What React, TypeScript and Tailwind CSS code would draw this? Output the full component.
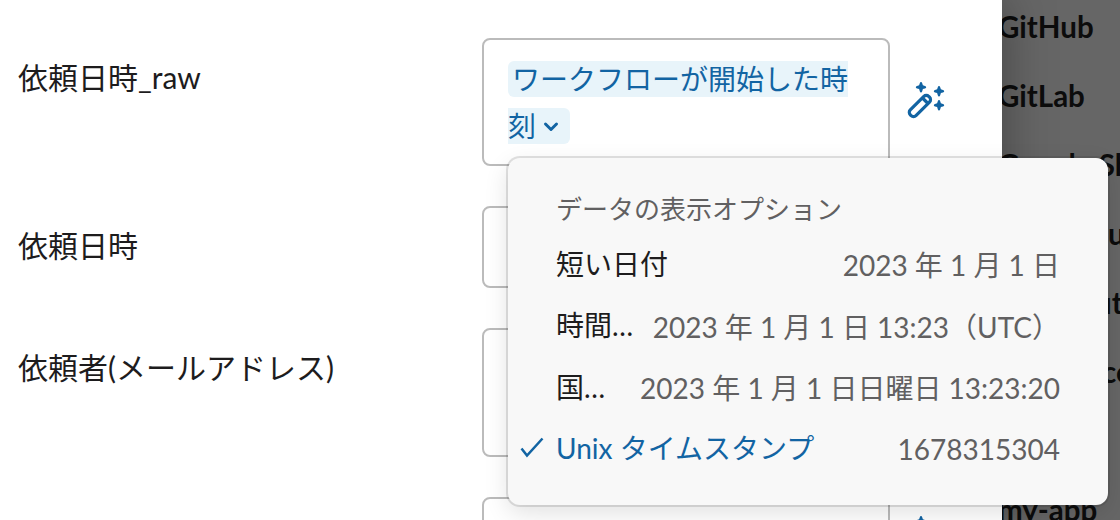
import React from "react";
import clsx from "clsx";

const apps = [
	{ name: "GitHub", offset: "pl-0" },
	{ name: "GitLab", offset: "pl-0" },
	{ name: "Google Sheets", offset: "pl-0" },
	{ name: "u", offset: "pl-[110px]" },
	{ name: "ut", offset: "pl-[97px]" },
	{ name: "co", offset: "pl-[104px]" },
	{ name: "", offset: "pl-0" },
	{ name: "my-app", offset: "pl-0" },
];

const options = [
	{ label: "短い日付", value: "2023 年 1 月 1 日" },
	{ label: "時間", truncated: true, value: "2023 年 1 月 1 日 13:23（UTC）" },
	{ label: "国", truncated: true, value: "2023 年 1 月 1 日日曜日 13:23:20" },
	{ label: "Unix タイムスタンプ", value: "1678315304", selected: true },
];

const sparkle =
	"M15 1.500q.9 0 1.200 1.200l.7 2.100 2.100.7q1.200.4 1.200 1.200t-1.200 1.200l-2.100.7-.7 2.100q-.3 1.200-1.200 1.200t-1.200-1.200l-.7-2.100-2.100-.7q-1.200-.4-1.200-1.200t1.200-1.200l2.100-.7.7-2.100q.3-1.200 1.200-1.200z";

const WandIcon = () => (
	<svg width="40" height="40" viewBox="0 0 40 40" fill="none" className="shrink-0">
		<g stroke="#1264a3" strokeWidth="3.2" strokeLinejoin="round">
			<rect x="-13" y="-4" width="26" height="8" rx="3.4" transform="translate(13.900 24) rotate(-45)" />
			<path d="M16.500 16l5.500 5.500" />
		</g>
		<g fill="#1264a3">
			<path d={sparkle} transform="translate(0 -1.500)" />
			<path d={sparkle} transform="translate(18 2.500)" />
			<path d={sparkle} transform="translate(18 16.500)" />
		</g>
	</svg>
);

type FieldRowProps = {
	label?: string;
	height: string;
	children?: React.ReactNode;
	icon?: React.ReactNode;
};

const FieldRow = ({ label, height, children, icon }: FieldRowProps) => (
	<div className={clsx("flex shrink-0", height)}>
		<div className="w-[464px] shrink-0 pt-[17px] text-[30px] leading-[44px]">{label}</div>
		<div className="w-[408px] shrink-0 rounded-lg border-2 border-[#bbb] pl-6 pt-4">
			{children}
		</div>
		<div className="flex items-center pl-4">{icon}</div>
	</div>
);

const DateOptionsMenu = () => (
	<div className="absolute left-[508px] top-[158px] z-20 h-[347px] w-[600px] rounded-xl bg-[#f8f8f8] px-12 pt-[29px] shadow-[0_0_0_2px_rgba(29,28,29,0.13),0_8px_24px_rgba(0,0,0,0.12)]">
		<div className="h-[46.3px] text-[26px] leading-[44px] text-[#616061]">
			データの表示オプション
		</div>
		<ul>
			{options.map((option) => (
				<li
					key={option.label}
					className="relative flex h-[61.3px] items-center justify-between whitespace-nowrap text-[28px] leading-[44px]"
				>
					{option.selected && (
						<svg width="24" height="22" viewBox="0 0 24 22" fill="none" className="absolute -left-9 top-5">
							<path d="M1.500 11.500L7 18.500L22.500 1.500" stroke="#1264a3" strokeWidth="2.500" />
						</svg>
					)}
					<span className={option.selected ? "text-[#1264a3]" : "text-[#1d1c1d]"}>
						{option.label}
						{option.truncated && <span className="tracking-[0.6px]">...</span>}
					</span>
					<span className="pt-[3px] text-[#616061]">{option.value}</span>
				</li>
			))}
		</ul>
	</div>
);

const App = () => {
	return (
		<div className="relative flex h-[520px] w-[1120px] overflow-hidden bg-[#666] font-['Lato','Noto_Sans_CJK_JP',sans-serif] text-[#1d1c1d]">
			<main className="z-10 flex w-[1002px] shrink-0 flex-col gap-10 bg-white pl-[18px] pt-[38px] shadow-[0_0_48px_rgba(0,0,0,0.35)]">
				<FieldRow label="依頼日時_raw" height="h-32" icon={<WandIcon />}>
					<div className="w-[344px] text-[28px] leading-[47px]">
						<span className="rounded-md bg-[#e8f4fa] py-px pl-1 pr-[11px] text-[#1264a3]">
							ワークフローが開始した時刻
							<svg width="16" height="12" viewBox="0 0 16 12" fill="none" className="-mt-1.5 ml-[7px] inline">
								<path d="M2.500 3l5.500 5.500L13.500 3" stroke="#1264a3" strokeWidth="3" strokeLinecap="round" strokeLinejoin="round" />
							</svg>
						</span>
					</div>
				</FieldRow>
				<FieldRow label="依頼日時" height="h-[82px]" />
				<FieldRow label="依頼者(メールアドレス)" height="h-[129px]" />
				<FieldRow height="h-[78px]" icon={<WandIcon />} />
			</main>

			<aside className="-ml-1 w-[122px] shrink-0 overflow-hidden text-[29.5px] font-bold text-[#0c0c0c]">
				<ul className="-mt-2">
					{apps.map((app, index) => (
						<li key={index} className={clsx("h-[69px] whitespace-nowrap leading-[69px]", app.offset)}>
							{app.name}
						</li>
					))}
				</ul>
			</aside>

			<DateOptionsMenu />
		</div>
	);
};

export default App;
